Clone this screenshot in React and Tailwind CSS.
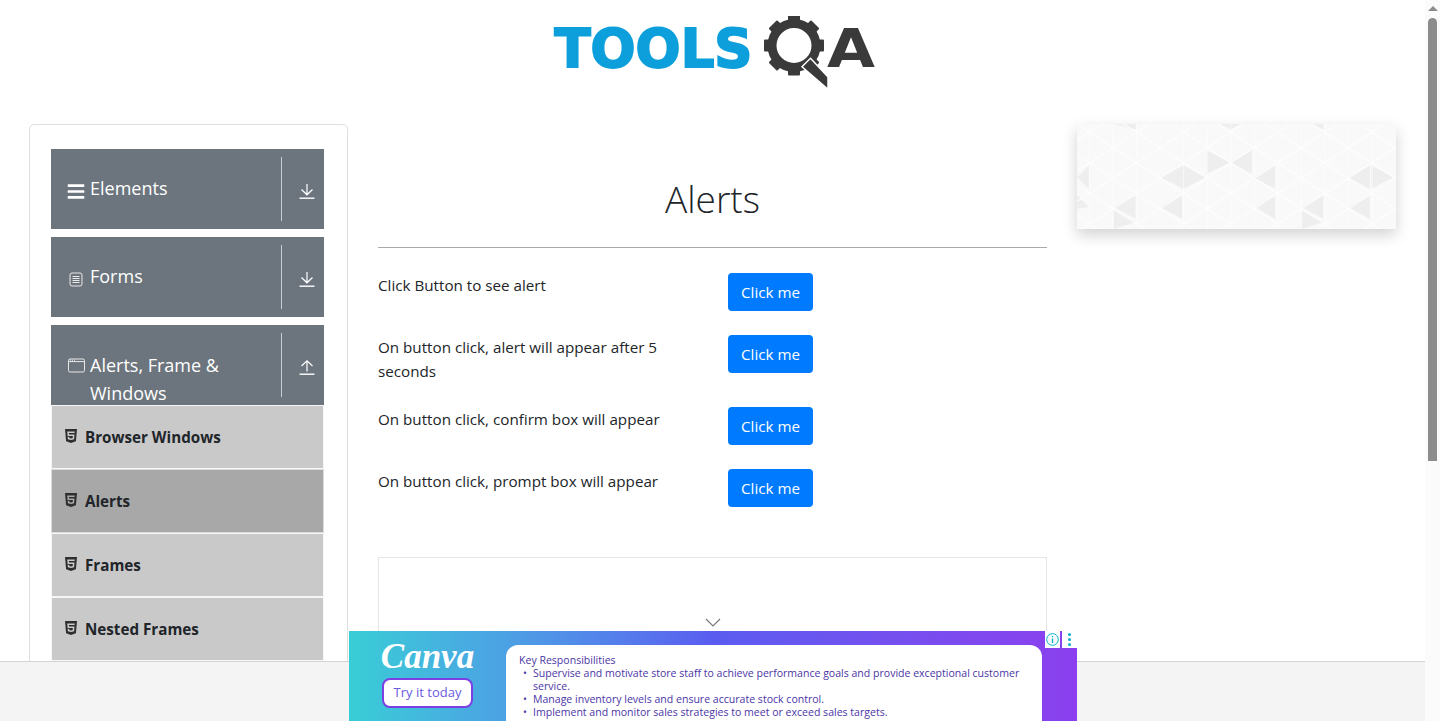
import React from 'react'
import { FaHtml5, FaBars } from 'react-icons/fa'

const BASE = "font-['Open_Sans',sans-serif]"

const darkTriangles = [
    '300,200 370,165 370,235', '370,165 435,200 370,235', '440,120 510,155 440,190', '510,155 575,120 575,190',
    '580,200 645,165 645,235', '865,200 930,165 930,235', '935,165 1000,200 935,235', '160,290 225,255 225,325',
    '300,290 365,255 365,325', '585,290 645,255 645,325', '725,290 790,255 790,325', '865,290 930,255 930,325',
    '50,200 85,165 85,235', '50,255 85,290 50,295', '160,300 225,335 160,356', '725,300 790,335 725,356',
    '160,40 225,40 225,56', '480,40 540,40 510,56', '755,40 790,40 790,56',
]

// white lattice lines of the banner pattern
const latticeLines = []
for (let n = -12; n < 14; n++) {
    const y0 = 65 + 92 * n
    latticeLines.push(`M0 ${y0 - 0.65 * 370} L1060 ${y0 + 0.65 * 690}`)
    latticeLines.push(`M0 ${y0 + 0.65 * 370} L1060 ${y0 - 0.65 * 690}`)
}

function Logo() {
    return (
        <svg width="322" height="74" viewBox="0 0 322 74" className="block">
            <text x="1.5" y="51" fontFamily="'DejaVu Sans', sans-serif" fontWeight="700" fontSize="54" fill="#0c9fdb" stroke="#0c9fdb" strokeWidth="2" textLength="198" lengthAdjust="spacingAndGlyphs">TOOLS</text>
            <g transform="translate(241 29.5)" fill="#3a3a3a">
                {[0, 45, 90, 135, 180, 225, 270, 315].map((a) => (
                    <rect key={a} x="-6" y="-30" width="12" height="10" rx="1" transform={`rotate(${a})`} />
                ))}
                <circle r="22" fill="none" stroke="#3a3a3a" strokeWidth="9" />
            </g>
            <path d="M257.5 42.3 L275 61 L275 73.3 L249 50.7 Z" fill="#3a3a3a" stroke="#fff" strokeWidth="1.5" />
            <text x="274" y="51" fontFamily="'DejaVu Sans', sans-serif" fontWeight="700" fontSize="54" fill="#3a3a3a" textLength="48" lengthAdjust="spacingAndGlyphs">A</text>
        </svg>
    )
}

function ArrowIcon({ up }) {
    return (
        <svg width="16" height="16" viewBox="0 0 16 16" fill="none" stroke="#fff" strokeWidth="1.2">
            <path d="M0.5 15.2 H15.5" strokeWidth="1.4" />
            {up ? <path d="M8 12.5 V2 M2.5 7 L8 1.8 L13.5 7" /> : <path d="M8 1 V11.5 M2.5 6.5 L8 11.8 L13.5 6.5" />}
        </svg>
    )
}

function FormIcon() {
    return (
        <svg width="14" height="15" viewBox="0 0 14 15" fill="none" stroke="#e8e8e8">
            <rect x="1" y="1" width="12" height="13" rx="2" />
            <path d="M3.5 4.5 H10.5 M3.5 6.5 H10.5 M3.5 8.5 H10.5 M3.5 10.5 H10.5" strokeWidth="1.2" />
        </svg>
    )
}

function WindowIcon() {
    return (
        <svg width="17" height="15" viewBox="0 0 17 15" fill="none" stroke="#e8e8e8">
            <rect x="0.5" y="1" width="16" height="13" rx="1.5" />
            <path d="M0.5 3.6 H16.5" />
            <path d="M2 2.2 H3 M4 2.2 H5 M6 2.2 H7" strokeWidth="1" />
        </svg>
    )
}

function MenuGroup({ icon, up, children }) {
    return (
        <div className="flex h-20 w-[273px] bg-[#6c757d] text-white">
            <div className={`flex flex-1 gap-[5px] pl-4 text-[18px] ${up ? 'items-start pt-[26px] leading-7' : 'items-center pb-[2px] leading-[29px]'}`}>
                <span className={`flex w-[18px] shrink-0 justify-center ${up ? 'pt-[7px]' : 'pt-[6px]'}`}>{icon}</span>
                <span className="w-[180px]">{children}</span>
            </div>
            <div className="my-2 flex w-[43px] items-center justify-center border-l border-[#c9ccd0] pt-1 pl-[8px]">
                <ArrowIcon up={up} />
            </div>
        </div>
    )
}

function SubItem({ label, active }) {
    return (
        <div className={`flex h-16 items-center gap-[8px] border pl-[13px] text-[15.2px] font-bold text-[#212529] ${active ? 'border-[#dcdcdc] bg-[#a8a8a8]' : 'border-[#f6f6f6] bg-[#c9c9c9]'}`}>
            <FaHtml5 className="mb-[2px] h-4 w-3 text-[#2f2f2f]" />
            <span className="pt-[1px]">{label}</span>
        </div>
    )
}

function AlertRow({ text }) {
    return (
        <div className="mb-6 flex items-start">
            <p className="w-[350px] pr-[50px] text-[15.2px] leading-6 text-[#212529]">{text}</p>
            <button className="h-[38px] w-[85px] rounded bg-[#007bff] text-[15.2px] text-white">Click me</button>
        </div>
    )
}

function CanvaAd() {
    return (
        <div className="flex h-[90px] w-[728px] overflow-hidden bg-gradient-to-r from-[#38cdd6] via-[#5a5cf0] to-[#8b3fee]">
            <div className="flex w-[157px] shrink-0 flex-col items-center pt-[6px]">
                <span className="font-['Liberation_Serif',serif] text-[35px] leading-[40px] font-bold text-white italic">Canva</span>
                <span className="mt-[1px] flex h-[30px] w-[91px] items-center justify-center rounded-lg border-2 border-[#7b3fe4] bg-white text-[13px] text-[#6a5ae0]">Try it today</span>
            </div>
            <div className="mt-[14px] h-[90px] w-[536px] rounded-t-xl bg-white pt-[9px] pl-[13px] text-[10.55px] leading-[13px] text-[#4a35a6]">
                <p>Key Responsibilities</p>
                <ul className="w-[510px] pl-[4px]">
                    {[
                        'Supervise and motivate store staff to achieve performance goals and provide exceptional customer service.',
                        'Manage inventory levels and ensure accurate stock control.',
                        'Implement and monitor sales strategies to meet or exceed sales targets.',
                    ].map((line) => (
                        <li key={line} className="flex gap-[6px]">
                            <span>•</span>
                            <span>{line}</span>
                        </li>
                    ))}
                </ul>
            </div>
        </div>
    )
}

function App() {
    return (
        <div className={`relative flex h-[721px] w-[1440px] overflow-hidden bg-white ${BASE}`}>
            <div className="w-[1425px]">
                <header className="flex h-[124px] justify-center pt-4">
                    <div className="ml-[2px]"><Logo /></div>
                </header>

                <div className="flex">
                    {/* Left menu */}
                    <aside className="ml-[29px] h-[700px] w-[319px] rounded-[5px] border border-[#dfdfdf] px-[21px] pt-6">
                        <div className="flex w-[273px] flex-col gap-2">
                            <MenuGroup icon={<FaBars className="h-[19px] w-[19px]" />}>Elements</MenuGroup>
                            <MenuGroup icon={<FormIcon />}>Forms</MenuGroup>
                            <div>
                                <MenuGroup icon={<WindowIcon />} up>Alerts, Frame &amp; Windows</MenuGroup>
                                <SubItem label="Browser Windows" />
                                <SubItem label="Alerts" active />
                                <SubItem label="Frames" />
                                <SubItem label="Nested Frames" />
                            </div>
                        </div>
                    </aside>

                    {/* Main column */}
                    <main className="ml-[30px] w-[669px]">
                        <h1 className="mt-12 text-center text-[37px] leading-[54px] font-light text-[#212529]">Alerts</h1>
                        <hr className="mt-[21px] mb-[25px] border-[#a9a9a9]" />
                        <AlertRow text="Click Button to see alert" />
                        <AlertRow text="On button click, alert will appear after 5 seconds" />
                        <AlertRow text="On button click, confirm box will appear" />
                        <AlertRow text="On button click, prompt box will appear" />
                        <div className="mt-[50px] flex h-[200px] justify-center border border-[#e5e5e5] pt-[60px]">
                            <svg width="16" height="10" viewBox="0 0 16 10" fill="none" stroke="#777" strokeWidth="1.2">
                                <path d="M1 1 L8 8 L15 1" />
                            </svg>
                        </div>
                    </main>

                    {/* Right banner */}
                    <div className="ml-[30px] h-[105px] w-[319px] bg-[#f9f9f9] shadow-[0_6px_14px_rgba(0,0,0,0.18)]">
                        <svg width="319" height="105" viewBox="50 40 958 316" className="block">
                            {darkTriangles.map((p) => <polygon key={p} points={p} fill="#eeeeee" />)}
                            <path d={latticeLines.join(' ')} stroke="#fff" strokeWidth="4" opacity="0.75" />
                            {[86, 157, 228, 299, 370, 441, 512, 583, 654, 725, 796, 867, 938].map((x) => (
                                <path key={x} d={`M${x} 40 V356`} stroke="#fff" strokeWidth="3" opacity="0.6" />
                            ))}
                        </svg>
                    </div>
                </div>
            </div>

            {/* Scrollbar */}
            <div className="flex w-[15px] flex-col items-center bg-[#fbfbfb]">
                <div className="mt-[6px] h-0 w-0 border-x-[5px] border-b-[5px] border-x-transparent border-b-[#8c8c8c]" />
                <div className="mt-[7px] h-[443px] w-[9px] rounded-t-[5px] bg-[#8c8c8c]" />
            </div>

            {/* Fixed footer with ad */}
            <div className="absolute bottom-0 left-0 h-[60px] w-[1425px] border-t border-[#d4d4d4] bg-[#f4f4f4]" />
            <div className="absolute bottom-0 left-[349px]">
                <CanvaAd />
                <div className="absolute top-0 right-0 flex h-[17px] gap-[2px]">
                    <span className="flex w-[15px] items-center justify-center bg-white">
                        <svg width="13" height="13" viewBox="0 0 13 13" fill="none" stroke="#00aecd" strokeWidth="1">
                            <circle cx="6.5" cy="6.5" r="5.8" />
                            <path d="M6.5 5.5 V10 M6.5 3 V4.2" strokeWidth="1.4" />
                        </svg>
                    </span>
                    <span className="flex w-[15px] flex-col items-center justify-center gap-[2px] bg-white">
                        <i className="h-[3px] w-[3px] rounded-full bg-[#00aecd]" />
                        <i className="h-[3px] w-[3px] rounded-full bg-[#00aecd]" />
                        <i className="h-[3px] w-[3px] rounded-full bg-[#00aecd]" />
                    </span>
                </div>
            </div>
        </div>
    )
}

export default App
